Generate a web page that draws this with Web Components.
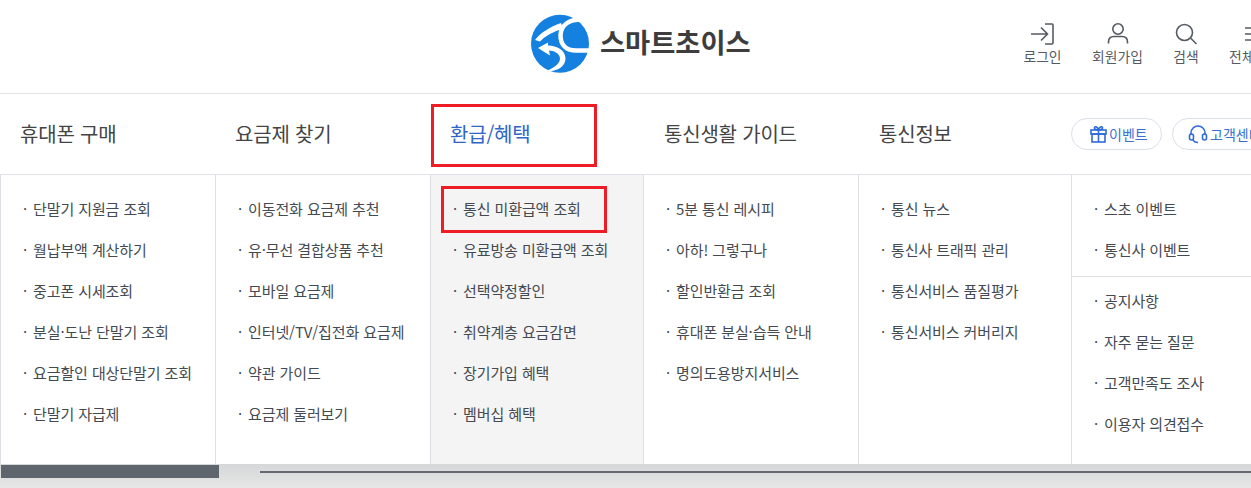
<!DOCTYPE html>
<html lang="ko"><head><meta charset="utf-8"><style>
html,body{margin:0;padding:0;background:#fff;overflow:hidden;width:1251px;height:488px}
body{font-family:"Noto Sans CJK KR","Noto Sans",sans-serif;color:#444}
</style></head><body>
<site-page></site-page>
<script>
const F='"Noto Sans CJK KR","Noto Sans",sans-serif';
class SiteLogo extends HTMLElement{constructor(){super();this.attachShadow({mode:'open'}).innerHTML=`<style>
:host{display:flex;align-items:center;gap:10px}
svg{display:block;width:60px;height:60px}
span{font:700 27.300px/1 ${F};color:#3d3d3d;position:relative;top:-2px}
</style><svg viewBox="0 0 60 60"><circle cx="30" cy="29.700" r="29" fill="#1481e0"/>
<path d="M52 6C40 4.500 30.500 11 30.500 21.500C30.500 31.500 37 36.500 46 36.500L61 36.500" fill="none" stroke="#fff" stroke-width="4.500"/>
<path d="M5 26C10 19 20 13 31 9L33 14.500C24 17.500 15 22 10 27.500Z" fill="#fff"/>
<path d="M8 34L18 28.500L18 31.500C27 31.500 35.500 36.500 35.500 44.500C35.500 52.500 27 58 15 57.500C22 55 30 50.500 30 44.500C30 39.500 24 36.500 19 36.500L20 41.500Z" fill="#fff"/>
</svg><span>스마트초이스</span>`}}
customElements.define('site-logo',SiteLogo);
class TopAction extends HTMLElement{constructor(){super();this.attachShadow({mode:'open'}).innerHTML=`<style>
:host{display:flex;flex-direction:column;align-items:center;flex:none;width:var(--w,60px)}
.i{height:24px;display:flex;align-items:center;justify-content:center}
.l{font:400 13.800px/18px ${F};color:#555b63;white-space:nowrap;margin-top:1px}
</style><div class="i"><slot></slot></div><div class="l">${this.getAttribute('label')}</div>`}}
customElements.define('top-action',TopAction);
class PillLink extends HTMLElement{constructor(){super();this.attachShadow({mode:'open'}).innerHTML=`<style>
:host{display:inline-flex;align-items:center;justify-content:flex-start;flex:none;height:30px;border:1px solid #dbe0ea;border-radius:16px;background:#fff;font:400 14px/1 ${F};color:#3a6fd0;white-space:nowrap;gap:2px;padding-left:var(--p,18px);box-sizing:content-box}
</style><slot></slot>`}}
customElements.define('pill-link',PillLink);
class MenuCol extends HTMLElement{constructor(){super();this.attachShadow({mode:'open'}).innerHTML=`<style>
:host{display:block;box-sizing:border-box;flex:none;border-right:1px solid #dcdfe3;padding:13px 0 0 22px;height:289px}
:host([active]){background:#f4f4f4}
</style><slot></slot>`}}
customElements.define('menu-col',MenuCol);
class MenuItem extends HTMLElement{constructor(){super();this.attachShadow({mode:'open'}).innerHTML=`<style>
:host{display:block;font:400 15px/41px ${F};color:#444a52;white-space:nowrap;letter-spacing:-.1px}
b{font-weight:400;display:inline-block;width:10px}
</style><b>·</b><slot></slot>`}}
customElements.define('menu-item',MenuItem);
const cols=[
[215,['단말기 지원금 조회','월납부액 계산하기','중고폰 시세조회','분실·도난 단말기 조회','요금할인 대상단말기 조회','단말기 자급제']],
[215,['이동전화 요금제 추천','유·무선 결합상품 추천','모바일 요금제','인터넷/TV/집전화 요금제','약관 가이드','요금제 둘러보기']],
[213,['통신 미환급액 조회','유료방송 미환급액 조회','선택약정할인','취약계층 요금감면','장기가입 혜택','멤버십 혜택']],
[215,['5분 통신 레시피','아하! 그렇구나','할인반환금 조회','휴대폰 분실·습득 안내','명의도용방지서비스']],
[213,['통신 뉴스','통신사 트래픽 관리','통신서비스 품질평가','통신서비스 커버리지']]];
const navs=[['휴대폰 구매',215],['요금제 찾기',215],['환급/혜택',214],['통신생활 가이드',215],['통신정보',0]];
class SitePage extends HTMLElement{constructor(){super();this.attachShadow({mode:'open'}).innerHTML=`<style>
:host{display:block;width:1251px;height:488px;overflow:hidden;position:relative}
.head{height:93px;border-bottom:1px solid #e2e4e7;display:flex;box-sizing:content-box;position:relative;overflow:hidden}
.logo{position:absolute;left:530px;top:14px}
.acts{margin-left:1012px;padding-top:22px;display:flex;gap:0;width:300px;height:60px;flex:none}
.nav{height:80px;border-bottom:1px solid #dfe2e7;display:flex;align-items:center;padding-left:20px;position:relative;box-sizing:content-box}
.nav a{font:400 20px/1 ${F};color:#444;flex:none;white-space:nowrap;letter-spacing:-.2px}
.nav a.on{color:#2f66c8}
.pills{position:absolute;left:1071px;top:24px;display:flex;gap:10px}
.panel{display:flex;border-left:1px solid #dcdfe3;height:289px}
.red{position:absolute;border:3px solid #ee1c25;box-sizing:border-box;pointer-events:none}
.foot{position:absolute;left:0;right:0;top:464px;height:24px;background:linear-gradient(#d6d7d9,#e6e6e6)}
.dark{position:absolute;left:1px;top:1px;width:218px;height:13px;background:#5e656d}
.line{position:absolute;left:260px;right:0;top:7px;height:2px;background:#666a70}
</style>
<div class="head"><site-logo class="logo"></site-logo>
<div class="acts">
<top-action label="로그인" style="--w:61px"><svg width="26" height="24" viewBox="0 0 26 24" fill="none" stroke="#555b63" stroke-width="1.600"><path d="M1 12h16M11 5.500l6.500 6.500-6.500 6.500M15 2h7a1 1 0 0 1 1 1v18a1 1 0 0 1-1 1h-7" /></svg></top-action>
<top-action label="회원가입" style="--w:89px"><svg width="22" height="24" viewBox="0 0 22 24" fill="none" stroke="#555b63" stroke-width="1.600"><circle cx="11" cy="7" r="5.200"/><path d="M1.500 21.500v-1.500C1.500 16.500 3.500 14.500 7 14.500h8c3.500 0 5.500 2 5.500 5.500v1.500"/></svg></top-action>
<top-action label="검색" style="--w:48px"><svg width="24" height="24" viewBox="0 0 24 24" fill="none" stroke="#555b63" stroke-width="1.600"><circle cx="10.500" cy="10.500" r="8"/><path d="M16.500 16l6 6"/></svg></top-action>
<top-action label="전체메뉴" style="--w:89px"><svg width="22" height="24" viewBox="0 0 22 24" fill="none" stroke="#555b63" stroke-width="1.600"><path d="M1 6h20M1 12h20M1 18h20"/></svg></top-action>
</div></div>
<div class="nav">${navs.map((n,i)=>`<a class="${i==2?'on':''}" style="width:${n[1]||150}px">${n[0]}</a>`).join('')}
<div class="pills"><pill-link style="width:71px"><svg width="17" height="18" viewBox="0 0 17 18" fill="none" stroke="#2f6ad8" stroke-width="1.600"><rect x="1" y="5" width="15" height="4"/><rect x="2" y="9" width="13" height="8"/><path d="M8.500 5v12M8.500 5C6 5 4 4 4.500 2.500S8 2 8.500 5C9 2 12 1 12.500 2.500S11 5 8.500 5"/></svg>이벤트</pill-link><pill-link style="width:103px;--p:15px"><svg width="20" height="20" viewBox="0 0 20 20" fill="none" stroke="#2f6ad8" stroke-width="1.600"><path d="M3 11V9a7 7 0 0 1 14 0v2"/><rect x="1.500" y="10" width="4" height="6" rx="2"/><rect x="14.500" y="10" width="4" height="6" rx="2"/><path d="M5 16c1 2 3 2.500 5 2.500"/></svg>고객센터</pill-link></div></div>
<div class="panel">${cols.map((c,i)=>`<menu-col ${i==2?'active':''} style="width:${c[0]}px">${c[1].map(t=>`<menu-item>${t}</menu-item>`).join('')}</menu-col>`).join('')}
<menu-col style="width:180px;padding:0;border:none"><div style="height:102px;box-sizing:border-box;padding:13px 0 0 22px;border-bottom:1px solid #dcdfe3;margin:0"><menu-item>스초 이벤트</menu-item><menu-item>통신사 이벤트</menu-item></div><div style="padding:3px 0 0 22px"><menu-item>공지사항</menu-item><menu-item>자주 묻는 질문</menu-item><menu-item>고객만족도 조사</menu-item><menu-item>이용자 의견접수</menu-item></div></menu-col>
</div>
<div class="red" style="left:431px;top:104px;width:166px;height:63px"></div>
<div class="red" style="left:441px;top:186px;width:166px;height:47px"></div>
<div class="foot"><div class="dark"></div><div class="line"></div></div>
`}}
customElements.define('site-page',SitePage);
</script></body></html>
